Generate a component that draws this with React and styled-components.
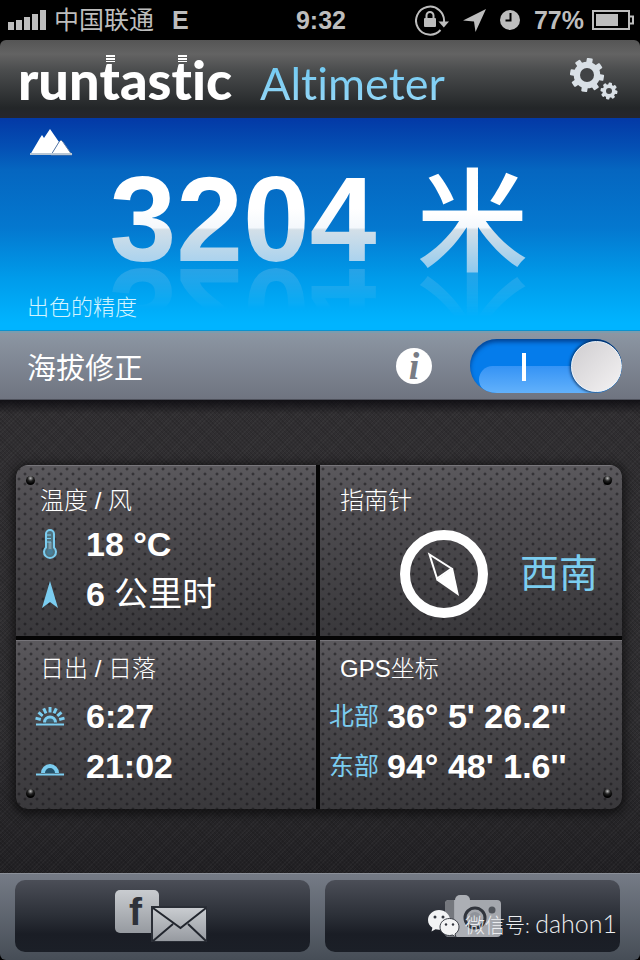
import { useState } from "react";
import styled, { createGlobalStyle, css } from "styled-components";

const cjk = `"Liberation Sans", "Noto Sans CJK SC", sans-serif`;
const blue = "#7bcdf0";

const GlobalStyle = createGlobalStyle`
  * {
    box-sizing: border-box;
  }

  body {
    margin: 0;
    background: #000;
    color: #fff;
    font-family: ${cjk};
  }

  button {
    border: 0;
    padding: 0;
    color: inherit;
    font-family: inherit;
    cursor: pointer;
  }

  h1, h2, p {
    margin: 0;
    font-weight: inherit;
  }

  svg {
    display: block;
  }
`;

const Screen = styled.div`
  min-height: 100vh;
  display: flex;
  flex-direction: column;
  position: relative;
`;

/* status bar */

const StatusBar = styled.div`
  height: 40px;
  padding: 0 6px 0 8px;
  display: grid;
  grid-template-columns: 1fr auto 1fr;
  align-items: center;
  color: #bdbdbd;
  font-size: 25px;
  font-weight: 700;
  line-height: 40px;
`;

const StatusGroup = styled.div`
  display: flex;
  align-items: center;
  justify-content: ${(p) => (p.$end ? "flex-end" : "flex-start")};
  gap: ${(p) => (p.$end ? "14px" : "8px")};
`;

const Carrier = styled.span`
  font-weight: 400;
  margin-right: 10px;
`;

const BatteryGroup = styled.span`
  display: flex;
  align-items: center;
  gap: 8px;
`;

/* header */

const Header = styled.header`
  height: 78px;
  padding: 0 21px 0 18px;
  display: flex;
  align-items: center;
  justify-content: space-between;
  border-radius: 6px 6px 0 0;
  background: linear-gradient(#555 0, #636363 14px, #4b4d4e 30px, #232628 68px, #26262c 100%);
`;

const Brand = styled.h1`
  display: flex;
  align-items: baseline;
  gap: 28px;
  padding-top: 4px;
  font-family: Lato, sans-serif;
  font-variant-ligatures: none;
  line-height: 74px;
`;

const Wordmark = styled.span`
  font-size: 54px;
  font-weight: 900;
`;

const StripedT = styled.span`
  position: relative;

  &::before {
    content: "";
    position: absolute;
    left: 6px;
    top: 8px;
    width: 9px;
    height: 7px;
    background: repeating-linear-gradient(#fff 0 2px, transparent 2px 3px);
  }
`;

const Product = styled.span`
  font-size: 45px;
  font-weight: 400;
  color: transparent;
  background: linear-gradient(#5fc4f2, #a5dcf7);
  background-clip: text;
`;

const GearButton = styled.button`
  background: none;
`;

/* altitude */

const Hero = styled.section`
  height: 213px;
  padding: 10px 29px 8px 27px;
  display: flex;
  flex-direction: column;
  justify-content: space-between;
  background: linear-gradient(#0339a6 0, #0450b4 30px, #0566c0 52px, #0478cf 110px, #009bea 160px, #00b4ff 205px, #00b4ff 100%);
  border-bottom: 1px solid #0a93d0;
`;

const Altitude = styled.p`
  display: flex;
  align-items: flex-start;
  justify-content: center;
  gap: 40px;
`;

const shine = css`
  color: transparent;
  background-clip: text;
`;

const Digits = styled.span`
  ${shine}
  font-size: 120px;
  font-weight: 700;
  line-height: 108px;
  background-image: linear-gradient(#fff 40%, #f4f8fc 58%, #d3dfe8 60%, #a9d2ee 90%);
  -webkit-box-reflect: below -16px linear-gradient(transparent 52%, rgba(255, 255, 255, 0.3));
`;

const Unit = styled.span`
  ${shine}
  font-size: 112px;
  font-weight: 500;
  line-height: 120px;
  background-image: linear-gradient(#fff 40%, #f4f8fc 52%, #d3dfe8 54%, #8ec9ee 90%);
  -webkit-box-reflect: below -26px linear-gradient(transparent 52%, rgba(255, 255, 255, 0.3));
`;

const Accuracy = styled.p`
  font-size: 22px;
  font-weight: 300;
  line-height: 28px;
  color: #d2f4ff;
`;

/* correction */

const CorrectionBar = styled.section`
  height: 69px;
  padding: 0 18px 0 27px;
  display: flex;
  align-items: center;
  gap: 38px;
  background: linear-gradient(#8c96a3, #6f7480);
  border-top: 2px solid #7c9cae;
  border-bottom: 1px solid #4f525c;
`;

const CorrectionLabel = styled.label`
  flex: 1;
  font-size: 29px;
`;

const InfoButton = styled.button`
  width: 36px;
  height: 36px;
  border-radius: 50%;
  background: #fff;
  color: #777c85;
  font-family: "Liberation Serif", serif;
  font-size: 38px;
  font-style: italic;
  font-weight: 700;
  line-height: 36px;
`;

const Switch = styled.span`
  position: relative;
  width: 152px;
  height: 54px;
  border-radius: 27px;
  overflow: hidden;
  background: ${(p) => (p.$on ? "#057ceb" : "#8b8f96")};
  box-shadow: inset 0 3px 4px rgba(0, 30, 90, 0.6);

  &::before {
    content: "";
    position: absolute;
    left: 9px;
    right: 0;
    bottom: 0;
    height: 27px;
    border-radius: 14px;
    background: linear-gradient(#3593f5, #62b1fb);
    opacity: ${(p) => (p.$on ? 1 : 0.3)};
  }

  &::after {
    content: "";
    position: absolute;
    left: 52px;
    top: 14px;
    width: 4px;
    height: 28px;
    background: #fff;
    opacity: ${(p) => (p.$on ? 1 : 0)};
  }
`;

const SwitchInput = styled.input`
  position: absolute;
  inset: 0;
  z-index: 2;
  width: 100%;
  height: 100%;
  margin: 0;
  opacity: 0;
  cursor: pointer;
`;

const Knob = styled.span`
  position: absolute;
  z-index: 1;
  top: 2px;
  right: ${(p) => (p.$on ? "0" : "101px")};
  width: 51px;
  height: 51px;
  border-radius: 50%;
  border: 1px solid #f6f6f6;
  background: linear-gradient(135deg, #cfcdd0, #f4f2f3);
  box-shadow: 0 0 3px 1px rgba(0, 20, 50, 0.75);
`;

/* panel */

const Main = styled.main`
  flex: 1;
  padding: 65px 18px 64px 16px;
  background:
    linear-gradient(rgba(10, 9, 14, 0.8), transparent 14px),
    repeating-linear-gradient(45deg, rgba(0, 0, 0, 0.12) 0 1px, transparent 1px 3px),
    repeating-linear-gradient(-45deg, rgba(255, 255, 255, 0.03) 0 1px, transparent 1px 3px),
    linear-gradient(#302e31, #2e2d30 70%, #212023);
`;

const Panel = styled.div`
  position: relative;
  display: grid;
  grid-template-columns: 300fr 302fr;
  gap: 4px;
  border-radius: 12px;
  overflow: hidden;
  background: #050505;
  box-shadow: 0 2px 8px 4px rgba(0, 0, 0, 0.5);
`;

const Cell = styled.section`
  padding: ${(p) => (p.$lower ? "10px 0 18px" : "17px 0")};
  border-top: 1px solid #77757a;
  background:
    radial-gradient(circle at 3px 3px, rgba(20, 19, 22, 0.8) 0, transparent 2px) 0 0 / 12px 10px,
    radial-gradient(circle at 9px 8px, rgba(20, 19, 22, 0.8) 0, transparent 2px) 0 0 / 12px 10px,
    linear-gradient(#5b595d, #504e52 20%, #39383b);
`;

const CellTitle = styled.h2`
  padding: 0 24px 0 ${(p) => (p.$right ? "20px" : "24px")};
  font-size: 24px;
  font-weight: 300;
  line-height: 36px;
`;

const Readings = styled.div`
  padding: ${(p) => (p.$lower ? "4px" : "0")} 0 0 ${(p) => (p.$coords ? "9px" : "19px")};
`;

const Reading = styled.div`
  height: 50px;
  display: flex;
  align-items: center;
  gap: ${(p) => (p.$coords ? "8px" : "21px")};
  font-size: 34px;
  font-weight: 700;
  line-height: 50px;
  white-space: pre;
`;

const IconSlot = styled.span`
  width: 30px;
  display: flex;
  justify-content: center;
`;

const Plain = styled.span`
  font-weight: 400;
`;

const CoordLabel = styled.span`
  color: ${blue};
  font-size: 25px;
  font-weight: 400;
`;

const CompassRow = styled.div`
  height: 88px;
  margin-top: 11px;
  padding-right: 24px;
  display: flex;
  align-items: center;
  justify-content: flex-end;
  gap: 32px;
`;

const Direction = styled.span`
  color: ${blue};
  font-size: 39px;
  line-height: 50px;
`;

const Screw = styled.i`
  position: absolute;
  ${(p) => p.$v}: 11px;
  ${(p) => p.$h}: 10px;
  width: 9px;
  height: 9px;
  border-radius: 50%;
  background: radial-gradient(circle at 50% 25%, #bbb 0, #222 35%, #000 70%);
`;

/* footer */

const Footer = styled.footer`
  padding: 6px 20px 8px 15px;
  display: grid;
  grid-template-columns: 1fr 1fr;
  gap: 15px;
  border-top: 1px solid #8b9099;
  border-radius: 0 0 6px 6px;
  background: linear-gradient(#757b86, #464d56);
`;

const FooterButton = styled.button`
  height: 72px;
  display: flex;
  align-items: center;
  justify-content: center;
  border-radius: 10px;
  background: linear-gradient(#4b4e57, #2b2f37 50%, #1a1d25 75%, #1b1f27);
`;

const Watermark = styled.div`
  position: absolute;
  right: 23px;
  bottom: 19px;
  display: flex;
  align-items: center;
  gap: 5px;
  color: #eceef0;
  font-family: Lato, "Noto Sans CJK SC", sans-serif;
  font-size: 20px;
  font-weight: 300;
  line-height: 32px;
  pointer-events: none;
`;

const Account = styled.span`
  font-size: 25px;
`;

/* icons */

function SignalIcon() {
  return (
    <svg width="38" height="22" viewBox="0 0 38 22" fill="#bdbdbd" aria-hidden="true">
      <rect x="0" y="13" width="6" height="8" />
      <rect x="8" y="11" width="6" height="10" />
      <rect x="16" y="8" width="6" height="13" />
      <rect x="24" y="5" width="6" height="16" />
      <rect x="32" y="1" width="6" height="20" />
    </svg>
  );
}

function RotationLockIcon() {
  return (
    <svg width="34" height="32" viewBox="0 0 34 32" aria-hidden="true">
      <path d="M25.500 26A14 14 0 1 1 29 18" fill="none" stroke="#bdbdbd" strokeWidth="2" />
      <path d="M23.500 17.500H34l-5.200 6z" fill="#bdbdbd" />
      <rect x="9" y="14" width="12" height="9" rx="1" fill="#bdbdbd" />
      <path d="M11.500 15v-3.500a3.500 3.500 0 0 1 7 0V15" fill="none" stroke="#bdbdbd" strokeWidth="2" />
    </svg>
  );
}

function LocationIcon() {
  return (
    <svg width="23" height="23" viewBox="0 0 23 23" fill="#bdbdbd" aria-hidden="true">
      <path d="M23 0 12.500 23 11 12.500 0 11.500z" />
    </svg>
  );
}

function ClockIcon() {
  return (
    <svg width="20" height="20" viewBox="0 0 20 20" aria-hidden="true">
      <circle cx="10" cy="10" r="10" fill="#bdbdbd" />
      <path d="M10.500 3v7.500H5.500" fill="none" stroke="#000" strokeWidth="2" />
    </svg>
  );
}

function BatteryIcon() {
  return (
    <svg width="42" height="20" viewBox="0 0 42 20" aria-hidden="true">
      <rect x="1" y="1" width="36" height="18" fill="none" stroke="#bdbdbd" strokeWidth="2" />
      <rect x="4" y="4" width="22" height="12" fill="#bdbdbd" />
      <path d="M38 6.500h3v7h-3" fill="none" stroke="#bdbdbd" strokeWidth="2" />
    </svg>
  );
}

function Gear({ cx, cy, r, hole, tooth }) {
  return (
    <g transform={`translate(${cx} ${cy})`}>
      {[10, 55, 100, 145].map((a) => (
        <rect
          key={a}
          x={-tooth / 2}
          y={-r}
          width={tooth}
          height={r * 2}
          rx="1"
          transform={`rotate(${a})`}
          fill="#d9e0e6"
        />
      ))}
      <circle r={r * 0.78} fill="#d9e0e6" />
      <circle r={hole} fill="#414345" />
    </g>
  );
}

function GearsIcon() {
  return (
    <svg width="49" height="42" viewBox="0 0 49 42" aria-hidden="true">
      <Gear cx={17} cy={17} r={17} hole={7} tooth={6} />
      <Gear cx={39} cy={33} r={8.500} hole={3} tooth={3.500} />
    </svg>
  );
}

function MountainsIcon() {
  return (
    <svg width="46" height="28" viewBox="0 0 46 28" aria-hidden="true">
      <path d="M3 27 13 10l2-3 2 3 6-9 9 13-8 13z" fill="#fff" />
      <path d="M24 27 32 14l2-2 2 2 9 13z" fill="#fff" stroke="#5d7ca8" strokeWidth="1" />
      <path d="M3 25h42v2H3z" fill="#b9c6d3" />
    </svg>
  );
}

function ThermometerIcon() {
  return (
    <svg width="16" height="32" viewBox="0 0 16 32" aria-hidden="true">
      <path
        d="M4 6a4 4 0 0 1 8 0v13.500a6 6 0 1 1-8 0z"
        fill="#50727f"
        stroke={blue}
        strokeWidth="2"
      />
      <path d="M8 14v9" stroke="#7f9dab" strokeWidth="3" />
      <circle cx="8" cy="24" r="3" fill="#467f9a" />
      <path d="M5 7h4M5 10.500h4M5 14h4" stroke={blue} strokeWidth="1" />
    </svg>
  );
}

function WindIcon() {
  return (
    <svg width="16" height="27" viewBox="0 0 16 27" aria-hidden="true">
      <path d="M8 0 16 27 8 21 0 27z" fill={blue} />
    </svg>
  );
}

function SunriseIcon() {
  return (
    <svg width="30" height="20" viewBox="0 0 30 20" aria-hidden="true">
      <path d="M1 18.500h28" stroke={blue} strokeWidth="2" />
      <path d="M9.500 16.500a5.500 5.500 0 0 1 11 0" fill="#3f6273" stroke={blue} strokeWidth="3" />
      {[-75, -50, -25, 0, 25, 50, 75].map((a) => (
        <path key={a} d="M15 6.500v-5.500" stroke={blue} strokeWidth="3" transform={`rotate(${a} 15 16)`} />
      ))}
    </svg>
  );
}

function SunsetIcon() {
  return (
    <svg width="28" height="20" viewBox="0 0 28 20" aria-hidden="true">
      <path d="M0 18.500h28" stroke={blue} strokeWidth="2" />
      <path d="M7 17a7 7 0 0 1 14 0" fill="#24526a" stroke={blue} strokeWidth="4" />
    </svg>
  );
}

function CompassIcon() {
  return (
    <svg width="88" height="88" viewBox="0 0 88 88" aria-hidden="true">
      <circle cx="44" cy="44" r="39" fill="none" stroke="#fff" strokeWidth="10" />
      <path d="M29.500 24.500 51.500 38.500 37 48.500z" fill="none" stroke="#fff" strokeWidth="2" />
      <path d="M53 38 59 66 36 50z" fill="#fff" />
    </svg>
  );
}

function ShareIcon() {
  return (
    <svg width="96" height="52" viewBox="0 0 96 52" aria-hidden="true">
      <defs>
        <linearGradient id="silver" x2="0" y2="1">
          <stop offset="0" stopColor="#c9ccd0" />
          <stop offset="1" stopColor="#969aa0" />
        </linearGradient>
      </defs>
      <rect x="0" y="0" width="44" height="43" rx="5" fill="url(#silver)" />
      <text x="14" y="35" fontFamily="Liberation Sans" fontWeight="700" fontSize="39" fill="#2d3139">
        f
      </text>
      <rect x="36" y="16" width="56" height="36" fill="#2a2e36" />
      <rect x="38" y="18" width="53" height="33" fill="url(#silver)" />
      <path d="M38 18 65.500 38 91 18M38 51 58 34M91 51 73 34" fill="none" stroke="#22262e" strokeWidth="2" />
    </svg>
  );
}

function CameraIcon() {
  return (
    <svg width="56" height="42" viewBox="0 0 56 42" aria-hidden="true">
      <rect x="0" y="5" width="56" height="37" rx="4" fill="#a4a7ad" />
      <path d="M0 9a4 4 0 0 1 4-4h5v37H4a4 4 0 0 1-4-4z" fill="#74777d" />
      <path d="M10 5a5 5 0 0 1 5-5h5a5 5 0 0 1 5 5v37H10z" fill="#acafb5" />
      <circle cx="30" cy="23" r="10" fill="#a4a7ad" stroke="#30343c" strokeWidth="3" />
      <circle cx="30" cy="23" r="6" fill="#8f939a" />
      <circle cx="47" cy="15" r="3.500" fill="#50545b" />
    </svg>
  );
}

function WeChatIcon() {
  return (
    <svg width="32" height="28" viewBox="0 0 32 28" aria-hidden="true">
      <path d="M11 0C5 0 0 4.500 0 10c0 3.400 1.700 6 4.400 7.800L3.500 21.500l4-2.200c1.200.3 2.300.5 3.500.5 6 0 11-4.300 11-9.800S17 0 11 0z" fill="#f2f3f4" />
      <path d="M21.500 8.500c-5.300 0-9.500 3.700-9.500 8.500s4.200 8.500 9.500 8.500c1 0 2-.2 3-.5l3.500 2-1-3c2.500-1.600 4-4 4-7 0-4.800-4.200-8.500-9.500-8.500z" fill="#f2f3f4" stroke="#3b3f47" strokeWidth="1" />
      <circle cx="7" cy="7" r="1.500" fill="#33373f" />
      <circle cx="15" cy="7" r="1.500" fill="#33373f" />
      <circle cx="18" cy="14.500" r="1.200" fill="#33373f" />
      <circle cx="25" cy="14.500" r="1.200" fill="#33373f" />
    </svg>
  );
}

function App() {
  const [correction, setCorrection] = useState(true);

  return (
    <Screen>
      <GlobalStyle />

      <StatusBar>
        <StatusGroup>
          <SignalIcon />
          <Carrier>中国联通</Carrier>
          <span>E</span>
        </StatusGroup>
        <span>9:32</span>
        <StatusGroup $end>
          <RotationLockIcon />
          <LocationIcon />
          <ClockIcon />
          <BatteryGroup>
            <span>77%</span>
            <BatteryIcon />
          </BatteryGroup>
        </StatusGroup>
      </StatusBar>

      <Header>
        <Brand>
          <Wordmark>
            run<StripedT>t</StripedT>as<StripedT>t</StripedT>ic
          </Wordmark>
          <Product>Altimeter</Product>
        </Brand>
        <GearButton aria-label="Settings">
          <GearsIcon />
        </GearButton>
      </Header>

      <Hero>
        <MountainsIcon />
        <Altitude>
          <Digits>3204</Digits>
          <Unit>米</Unit>
        </Altitude>
        <Accuracy>出色的精度</Accuracy>
      </Hero>

      <CorrectionBar>
        <CorrectionLabel htmlFor="correction">海拔修正</CorrectionLabel>
        <InfoButton>i</InfoButton>
        <Switch $on={correction}>
          <SwitchInput
            id="correction"
            type="checkbox"
            checked={correction}
            onChange={(e) => setCorrection(e.target.checked)}
          />
          <Knob $on={correction} />
        </Switch>
      </CorrectionBar>

      <Main>
        <Panel>
          <Cell>
            <CellTitle>温度 / 风</CellTitle>
            <Readings>
              <Reading>
                <IconSlot><ThermometerIcon /></IconSlot>
                <span>18 °C</span>
              </Reading>
              <Reading>
                <IconSlot><WindIcon /></IconSlot>
                <span>6 <Plain>公里时</Plain></span>
              </Reading>
            </Readings>
          </Cell>

          <Cell>
            <CellTitle $right>指南针</CellTitle>
            <CompassRow>
              <CompassIcon />
              <Direction>西南</Direction>
            </CompassRow>
          </Cell>

          <Cell $lower>
            <CellTitle>日出 / 日落</CellTitle>
            <Readings $lower>
              <Reading>
                <IconSlot><SunriseIcon /></IconSlot>
                <span>6:27</span>
              </Reading>
              <Reading>
                <IconSlot><SunsetIcon /></IconSlot>
                <span>21:02</span>
              </Reading>
            </Readings>
          </Cell>

          <Cell $lower>
            <CellTitle $right>GPS坐标</CellTitle>
            <Readings $lower $coords>
              <Reading $coords>
                <CoordLabel>北部</CoordLabel>
                <span>36° 5' 26.2''</span>
              </Reading>
              <Reading $coords>
                <CoordLabel>东部</CoordLabel>
                <span>94° 48' 1.6''</span>
              </Reading>
            </Readings>
          </Cell>

          <Screw $v="top" $h="left" />
          <Screw $v="top" $h="right" />
          <Screw $v="bottom" $h="left" />
          <Screw $v="bottom" $h="right" />
        </Panel>
      </Main>

      <Footer>
        <FooterButton aria-label="Share">
          <ShareIcon />
        </FooterButton>
        <FooterButton aria-label="Camera">
          <CameraIcon />
        </FooterButton>
      </Footer>

      <Watermark>
        <WeChatIcon />
        <span>微信号: <Account>dahon1</Account></span>
      </Watermark>
    </Screen>
  );
}

export default App;
